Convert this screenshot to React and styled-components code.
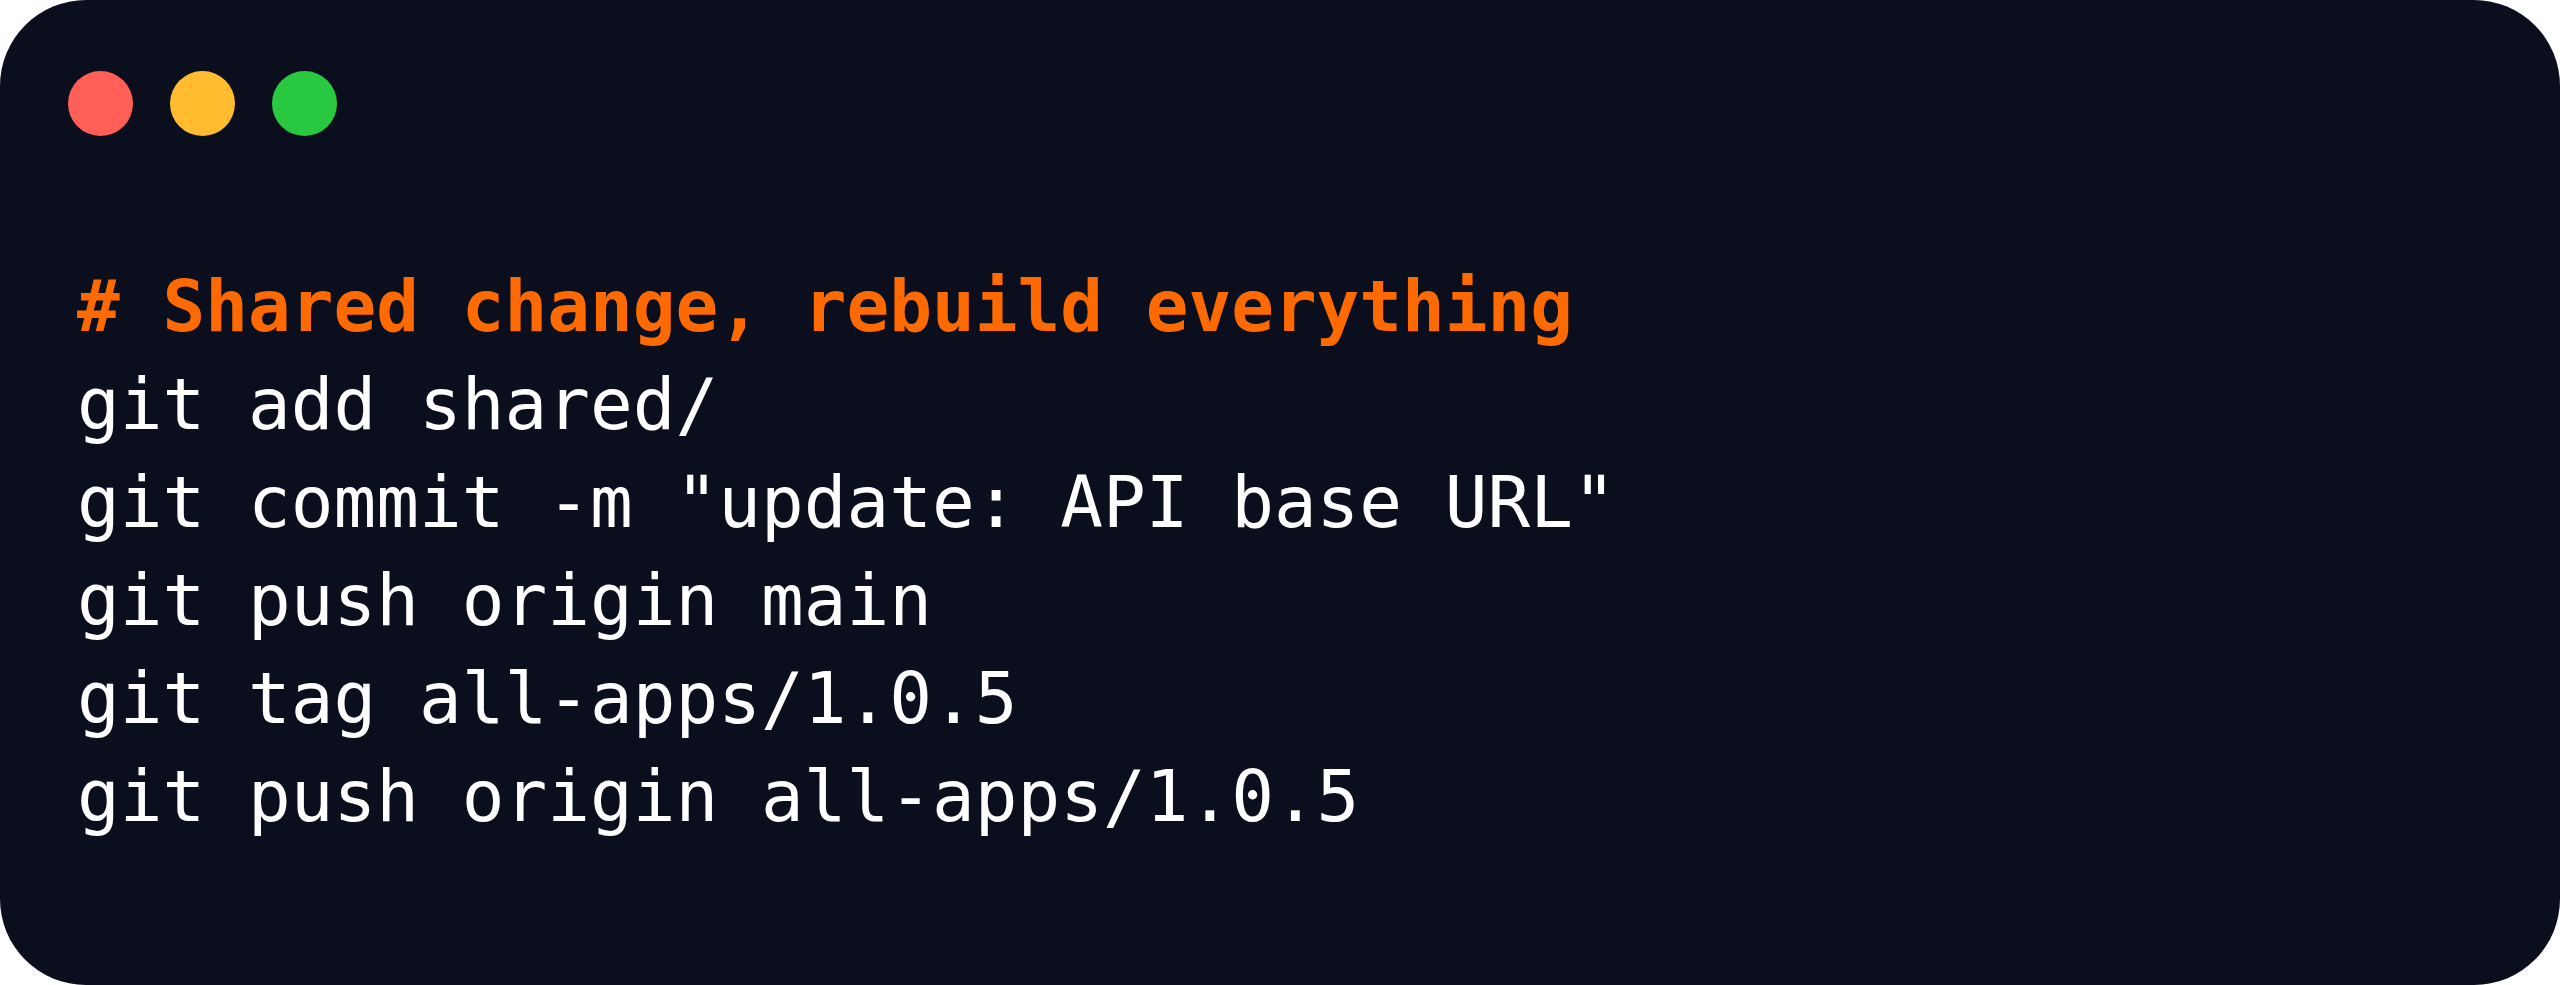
import React from "react";
import styled, { createGlobalStyle } from "styled-components";

const Global = createGlobalStyle`
  html, body { margin: 0; padding: 0; background: #ffffff; }
  #root { width: 2560px; height: 985px; }
`;

const Window = styled.div`
  box-sizing: border-box;
  width: 2560px;
  height: 985px;
  background: #0b0f1d;
  border-radius: 86px;
  padding: 71px 0 0 68px;
  display: flex;
  flex-direction: column;
  overflow: hidden;
`;

const Lights = styled.div`
  display: flex;
  gap: 37px;
`;

const Light = styled.span`
  width: 65px;
  height: 65px;
  border-radius: 50%;
  background: ${(p) => p.$color};
`;

const Code = styled.pre`
  margin: 122px 0 0 9px;
  font-family: "DejaVu Sans Mono", monospace;
  font-size: 71px;
  line-height: 98px;
  color: #ffffff;
`;

const Line = styled.div`
  white-space: pre;
  color: ${(p) => (p.$comment ? "#ff6a00" : "#ffffff")};
  font-weight: ${(p) => (p.$comment ? 700 : 400)};
`;

const lines = [
  { text: "# Shared change, rebuild everything", comment: true },
  { text: "git add shared/" },
  { text: 'git commit -m "update: API base URL"' },
  { text: "git push origin main" },
  { text: "git tag all-apps/1.0.5" },
  { text: "git push origin all-apps/1.0.5" },
];

export default function App() {
  return (
    <>
      <Global />
      <Window>
        <Lights>
          <Light $color="#ff5f57" />
          <Light $color="#febc2e" />
          <Light $color="#28c840" />
        </Lights>
        <Code>
          {lines.map((l, i) => (
            <Line key={i} $comment={l.comment}>
              {l.text}
            </Line>
          ))}
        </Code>
      </Window>
    </>
  );
}
